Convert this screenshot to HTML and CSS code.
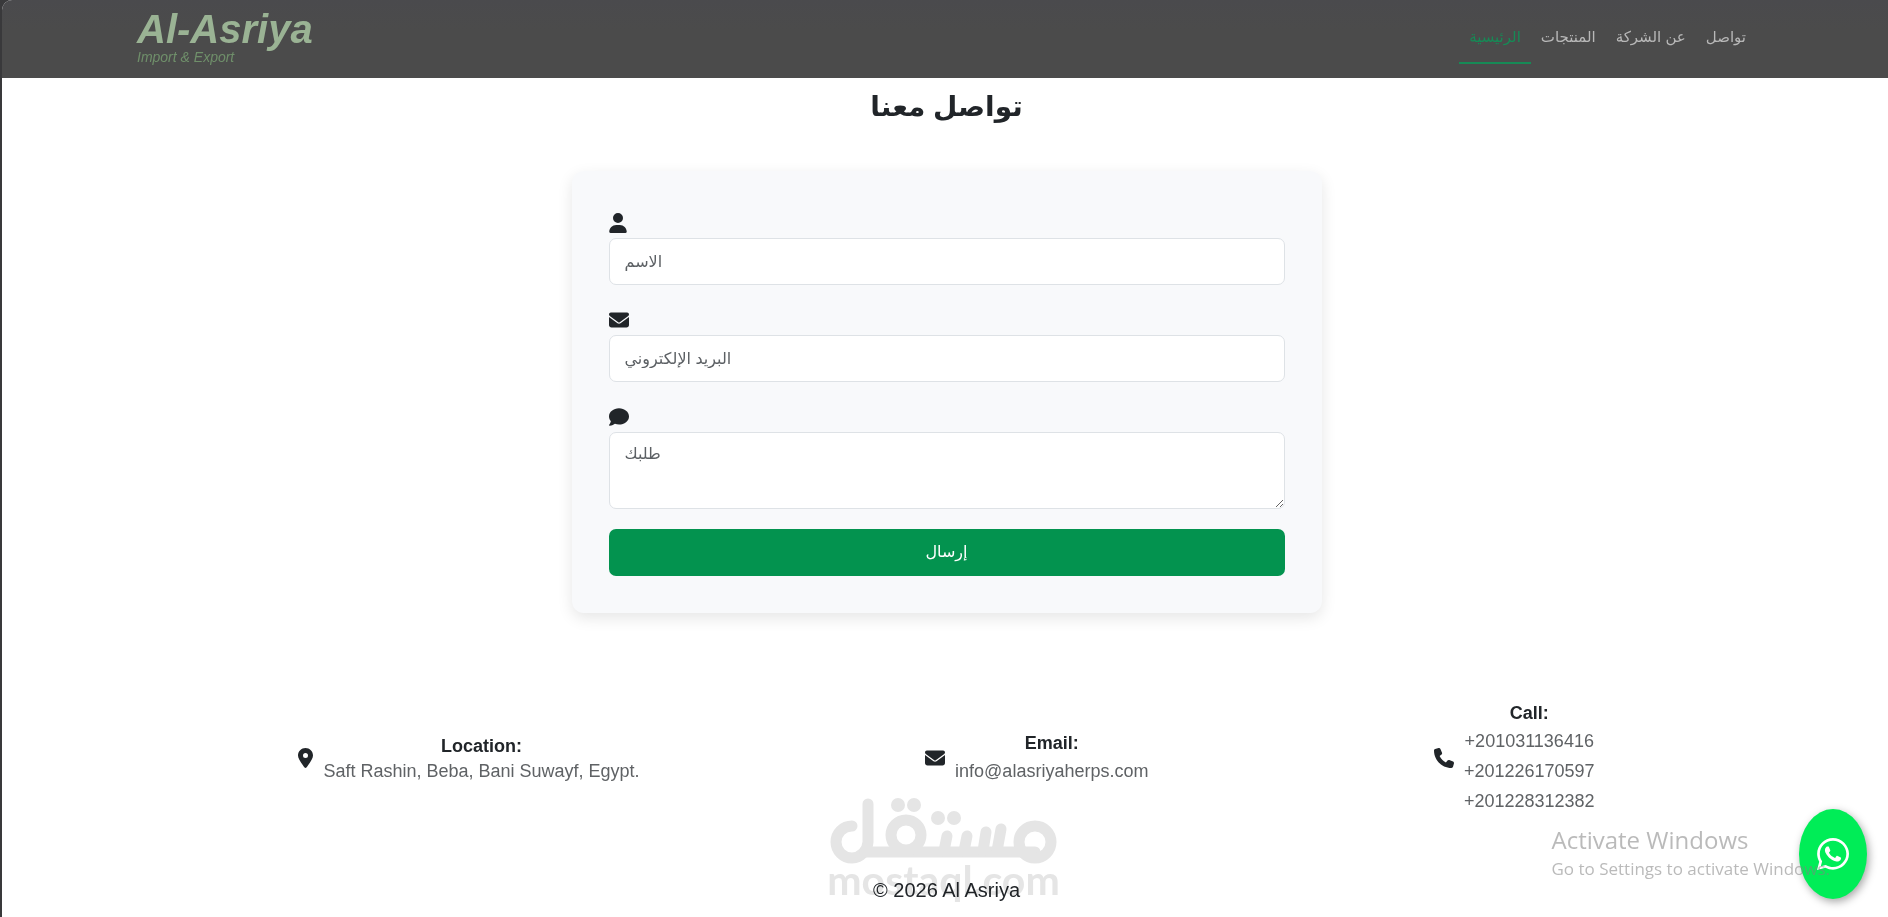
FILE: index.html
```html
<!DOCTYPE html>
<html lang="ar">
<head>
<meta charset="utf-8">
<meta name="viewport" content="width=device-width, initial-scale=1">
<title>Al-Asriya</title>
<link rel="stylesheet" href="styles.css">
</head>
<body>
<svg class="sprite" aria-hidden="true">
  <symbol id="i-user" viewBox="0 0 448 512"><path d="M224 256A128 128 0 1 0 224 0a128 128 0 1 0 0 256zm-45.700 48C79.800 304 0 383.800 0 482.300C0 498.700 13.300 512 29.700 512H418.300c16.400 0 29.700-13.300 29.700-29.700C448 383.800 368.200 304 269.700 304H178.300z"/></symbol>
  <symbol id="i-mail" viewBox="0 0 512 512"><path d="M48 64C21.500 64 0 85.500 0 112c0 15.100 7.100 29.300 19.200 38.400L236.800 313.600c11.400 8.500 27 8.500 38.400 0L492.800 150.400c12.100-9.100 19.200-23.300 19.200-38.400c0-26.500-21.500-48-48-48H48zM0 176V384c0 35.300 28.700 64 64 64H448c35.300 0 64-28.700 64-64V176L294.400 339.200c-22.800 17.100-54 17.100-76.800 0L0 176z"/></symbol>
  <symbol id="i-comment" viewBox="0 0 512 512"><path d="M512 240c0 114.900-114.600 208-256 208c-37.100 0-72.300-6.400-104.100-17.900c-11.900 8.700-31.300 20.600-54.300 30.600C73.600 471.100 44.700 480 16 480c-6.500 0-12.300-3.900-14.800-9.900c-2.500-6-1.100-12.800 3.400-17.400l0 0 0 0 0 0 0 0 .3-.3c.3-.3 .7-.7 1.300-1.400c1.100-1.200 2.800-3.100 4.900-5.700c4.100-5 9.600-12.400 15.200-21.600c10-16.600 19.500-38.400 21.400-62.900C17.700 326.800 0 285.100 0 240C0 125.100 114.600 32 256 32s256 93.100 256 208z"/></symbol>
  <symbol id="i-pin" viewBox="0 0 384 512"><path d="M215.700 499.200C267 435 384 279.400 384 192C384 86 298 0 192 0S0 86 0 192c0 87.400 117 243 168.300 307.200c12.300 15.300 35.100 15.300 47.400 0zM192 128a64 64 0 1 1 0 128 64 64 0 1 1 0-128z"/></symbol>
  <symbol id="i-phone" viewBox="0 0 512 512"><path d="M164.900 24.600c-7.700-18.600-28-28.500-47.400-23.200l-88 24C12.100 30.200 0 46 0 64C0 311.400 200.600 512 448 512c18 0 33.800-12.100 38.600-29.500l24-88c5.300-19.400-4.600-39.700-23.200-47.400l-96-40c-16.300-6.800-35.200-2.100-46.300 11.600L304.700 368C234.300 334.700 177.300 277.700 144 207.300L193.300 167c13.700-11.200 18.400-30 11.600-46.300l-40-96z"/></symbol>
  <symbol id="i-whatsapp" viewBox="0 32 448 448"><path d="M380.900 97.100C339 55.100 283.200 32 223.900 32c-122.400 0-222 99.600-222 222 0 39.100 10.200 77.300 29.600 111L0 480l117.700-30.900c32.400 17.700 68.900 27 106.100 27h.1c122.300 0 224.100-99.600 224.100-222 0-59.300-25.200-115-67.100-157zm-157 341.600c-33.200 0-65.700-8.900-94-25.700l-6.700-4-69.800 18.300L72 359.200l-4.400-7c-18.500-29.400-28.200-63.300-28.200-98.200 0-101.700 82.800-184.500 184.600-184.500 49.300 0 95.600 19.200 130.400 54.100 34.800 34.900 56.200 81.200 56.100 130.500 0 101.800-84.900 184.600-186.600 184.600zm101.200-138.200c-5.500-2.800-32.800-16.200-37.900-18-5.100-1.900-8.800-2.800-12.500 2.800-3.700 5.600-14.300 18-17.600 21.800-3.200 3.700-6.500 4.200-12 1.400-32.600-16.300-54-29.100-75.500-66-5.700-9.800 5.700-9.100 16.300-30.300 1.800-3.700.9-6.900-.5-9.700-1.400-2.800-12.500-30.100-17.100-41.200-4.500-10.800-9.100-9.300-12.500-9.500-3.200-.2-6.900-.2-10.600-.2-3.700 0-9.700 1.400-14.800 6.900-5.100 5.600-19.400 19-19.400 46.300 0 27.300 19.900 53.700 22.600 57.400 2.800 3.700 39.100 59.700 94.800 83.800 35.200 15.200 49 16.500 66.600 13.900 10.700-1.600 32.800-13.400 37.400-26.400 4.600-13 4.600-24.100 3.200-26.400-1.300-2.500-5-3.900-10.500-6.600z"/></symbol>
</svg>
<div class="page">
  <header class="topbar">
    <a class="brand" href="#">
      <span class="brand-name">Al-Asriya</span>
      <span class="brand-tag">Import &amp; Export</span>
    </a>
    <nav class="nav">
      <a class="nav-link active" href="#">الرئيسية</a>
      <a class="nav-link" href="#">المنتجات</a>
      <a class="nav-link" href="#">عن الشركة</a>
      <a class="nav-link" href="#">تواصل</a>
    </nav>
  </header>

  <main class="contact">
    <h1 class="title">تواصل معنا</h1>
    <form class="card">
      <div class="field">
        <label class="label" for="name" aria-label="الاسم"><svg class="icon icon-user"><use href="#i-user"/></svg></label>
        <input class="control" id="name" type="text" placeholder="الاسم">
      </div>
      <div class="field">
        <label class="label" for="email" aria-label="البريد الإلكتروني"><svg class="icon"><use href="#i-mail"/></svg></label>
        <input class="control" id="email" type="email" placeholder="البريد الإلكتروني">
      </div>
      <div class="field">
        <label class="label" for="message" aria-label="طلبك"><svg class="icon"><use href="#i-comment"/></svg></label>
        <textarea class="control area" id="message" placeholder="طلبك"></textarea>
      </div>
      <button class="submit" type="submit">إرسال</button>
    </form>
  </main>

  <footer class="footer">
    <div class="infos">
      <div class="info">
        <svg class="icon icon-pin"><use href="#i-pin"/></svg>
        <div class="info-text">
          <h2 class="info-title">Location:</h2>
          <p class="address">Saft Rashin, Beba, Bani Suwayf, Egypt.</p>
        </div>
      </div>
      <div class="info">
        <svg class="icon"><use href="#i-mail"/></svg>
        <div class="info-text">
          <h2 class="info-title">Email:</h2>
          <a class="info-link" href="#">info@alasriyaherps.com</a>
        </div>
      </div>
      <div class="info">
        <svg class="icon"><use href="#i-phone"/></svg>
        <div class="info-text">
          <h2 class="info-title">Call:</h2>
          <a class="info-link" href="#">+201031136416</a>
          <a class="info-link" href="#">+201226170597</a>
          <a class="info-link" href="#">+201228312382</a>
        </div>
      </div>
    </div>
    <div class="bottom">
      <p class="copyright">© 2026 Al Asriya</p>
      <div class="watermark">
        <svg class="watermark-logo" viewBox="0 0 228 68" role="img" aria-label="مستقل">
          <g fill="none" stroke="#e5e5e5" stroke-width="11" stroke-linecap="round">
            <path d="M22 28A16 16 0 0 0 22 60A17 17 0 0 0 38 44V6"/>
            <path d="M35 54H205"/>
            <circle cx="76" cy="37" r="15"/>
            <circle cx="205" cy="44" r="16"/>
            <path d="M117 38L114 53M137 38L134 53M156 34L153 53M171 31L167 53"/>
          </g>
          <g fill="#e5e5e5"><circle cx="68" cy="7" r="7"/><circle cx="84" cy="7" r="7"/><circle cx="108" cy="20" r="7"/><circle cx="124" cy="20" r="7"/></g>
        </svg>
        <span class="watermark-url">mostaql.com</span>
      </div>
    </div>
  </footer>
</div>
<a class="whatsapp" href="#" aria-label="WhatsApp"><svg class="whatsapp-icon"><use href="#i-whatsapp"/></svg></a>
<div class="activate">
  <p class="activate-title">Activate Windows</p>
  <p class="activate-text">Go to Settings to activate Windows.</p>
</div>
</body>
</html>
```

FILE: styles.css
```css
* { box-sizing: border-box; }

html { background: #39393b; }

body {
  margin: 0;
  font-family: "Liberation Sans", "DejaVu Sans", sans-serif;
  font-size: 18px;
  color: #212529;
}

h1, h2, p { margin: 0; }
a { text-decoration: none; }

.sprite { position: absolute; width: 0; height: 0; }

.page {
  margin-left: 2px;
  min-height: 100vh;
  background: #fff;
  border-top-left-radius: 10px;
  overflow: hidden;
}

.topbar {
  display: flex;
  justify-content: space-between;
  align-items: flex-start;
  height: 78px;
  padding: 8px 7% 0 135px;
  background: linear-gradient(#4a4a4d, #4b4b4b 30px);
}

.brand {
  display: flex;
  flex-direction: column;
  font-style: italic;
}

.brand-name {
  font-size: 40px;
  line-height: 42px;
  font-weight: 700;
  color: #9ab394;
}

.brand-tag {
  font-size: 14px;
  line-height: 14px;
  color: #6f8f6a;
}

.nav { display: flex; }

.nav-link {
  padding: 18px 10px 14px;
  font-size: 15px;
  line-height: 22px;
  color: #b8b8b8;
  border-bottom: 2px solid transparent;
}

.nav-link.active {
  color: #168a56;
  border-color: #168a56;
}

.contact {
  display: flex;
  flex-direction: column;
  align-items: center;
  padding: 7px 20px 0 23px;
}

.title {
  font-size: 28px;
  line-height: 44px;
  font-weight: 700;
}

.card {
  display: flex;
  flex-direction: column;
  gap: 20px;
  width: 100%;
  max-width: 750px;
  margin-top: 42px;
  padding: 37px;
  background: #f8f9fb;
  border-radius: 12px;
  box-shadow: 0 5px 15px rgba(0, 0, 0, 0.1);
}

.field { display: flex; flex-direction: column; }

.label {
  display: flex;
  align-items: center;
  height: 30px;
}

.icon {
  flex: none;
  width: 20px;
  height: 20px;
  fill: #212529;
}

.icon-user { width: 18px; }
.icon-pin { width: 15px; }

.control {
  width: 100%;
  height: 47px;
  padding: 7px 15px;
  font: inherit;
  font-size: 16px;
  line-height: 28px;
  color: #212529;
  background: #fff;
  border: 1px solid #dee2e6;
  border-radius: 7px;
}

.control::placeholder { color: #5c6064; opacity: 1; }

.area {
  display: block;
  height: 77px;
  resize: vertical;
}

.submit {
  height: 47px;
  padding: 0 15px 3px;
  font: inherit;
  font-size: 16px;
  color: #fff;
  background: #03934f;
  border: 0;
  border-radius: 7px;
}

.footer { padding: 87px 0 0 3px; }

.infos {
  display: flex;
  justify-content: space-around;
  align-items: center;
  padding: 0 8%;
}

.info { display: flex; align-items: center; gap: 10px; }

.info-text {
  display: flex;
  flex-direction: column;
  align-items: center;
}

.info-title { font-size: 18px; line-height: 26px; }

.address { line-height: 24px; color: #5f6265; }
.info-link { line-height: 30px; color: #5f6265; }

.bottom {
  position: relative;
  margin-top: 60px;
  padding-bottom: 14px;
  text-align: center;
}

.copyright { font-size: 20px; line-height: 28px; }

.watermark {
  position: absolute;
  bottom: 24px;
  left: 50%;
  display: flex;
  flex-direction: column;
  align-items: center;
  width: 228px;
  margin-left: -117px;
  mix-blend-mode: multiply;
}

.watermark-logo { width: 228px; height: 68px; }

.watermark-url {
  font-family: Lato, sans-serif;
  font-size: 41px;
  line-height: 28px;
  font-weight: 700;
  color: #e5e5e5;
}

.whatsapp {
  position: fixed;
  right: 21px;
  bottom: 18px;
  display: flex;
  align-items: center;
  justify-content: center;
  width: 68px;
  height: 90px;
  background: #00ed57;
  border-radius: 50%;
  box-shadow: 2px 3px 8px rgba(0, 0, 0, 0.35);
}

.whatsapp-icon { width: 32px; height: 32px; fill: #fff; }

.activate {
  position: fixed;
  right: 58px;
  bottom: 35px;
  font-family: "Open Sans", sans-serif;
  color: rgba(130, 130, 130, 0.55);
  pointer-events: none;
}

.activate-title { font-size: 24px; line-height: 32px; }
.activate-text { font-size: 17px; line-height: 26px; }
```
